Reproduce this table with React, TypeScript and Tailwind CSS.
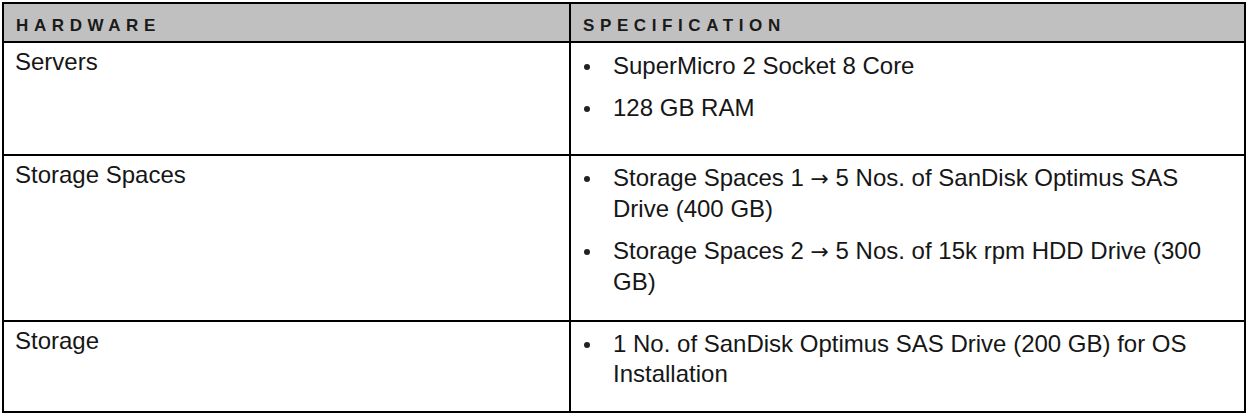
import React from 'react';

type Row = {
  hardware: string;
  height: string;
  specPad: string;
  specs: React.ReactNode[];
};

const Arrow = () => (
  <span className="font-['DejaVu_Sans',sans-serif] text-[22px]">{'\u2192'}</span>
);

const rows: Row[] = [
  {
    hardware: 'Servers',
    height: 'h-[113px]',
    specPad: 'pt-[8px]',
    specs: ['SuperMicro 2 Socket 8 Core', '128 GB RAM'],
  },
  {
    hardware: 'Storage Spaces',
    height: 'h-[166px]',
    specPad: 'pt-[7px]',
    specs: [
      <>
        <div>
          Storage Spaces 1 <Arrow /> 5 Nos. of SanDisk Optimus SAS
        </div>
        <div>Drive (400 GB)</div>
      </>,
      <>
        <div>
          Storage Spaces 2 <Arrow /> 5 Nos. of 15k rpm HDD Drive (300
        </div>
        <div>GB)</div>
      </>,
    ],
  },
  {
    hardware: 'Storage',
    height: 'h-[89px]',
    specPad: 'pt-[7px]',
    specs: ['1 No. of SanDisk Optimus SAS Drive (200 GB) for OS Installation'],
  },
];

const HeaderCell: React.FC<{ label: string; last?: boolean }> = ({ label, last }) => (
  <div
    className={`h-[39px] flex items-center pt-[5px] pl-[12px] bg-[#c0c0c0] border-b-2 border-black ${
      last ? '' : 'border-r-2'
    }`}
  >
    <span className="text-[17px] font-bold tracking-[5.6px] text-[#1a1a1a] leading-none">{label}</span>
  </div>
);

const App: React.FC = () => (
  <div className="w-[1248px] h-[416px] bg-white pt-[2px] pl-[2px] font-['Liberation_Sans',Arial,sans-serif]">
    <div className="w-[1244px] border-2 border-black grid grid-cols-[567px_1fr]">
      {/* Header */}
      <HeaderCell label="HARDWARE" />
      <HeaderCell label="SPECIFICATION" last />

      {/* Body rows */}
      {rows.map((row, i) => {
        const bottom = i < rows.length - 1 ? 'border-b-2' : '';
        return (
          <React.Fragment key={row.hardware}>
            <div
              className={`${row.height} ${bottom} border-r-2 border-black pl-[11px] pt-[4px] text-[24px] leading-[30px] text-[#161616]`}
            >
              {row.hardware}
            </div>
            <div className={`${row.height} ${bottom} border-black ${row.specPad} pr-[20px]`}>
              <ul className="flex flex-col gap-[12px]">
                {row.specs.map((s, j) => (
                  <li key={j} className="flex text-[24px] leading-[30px] text-[#161616]">
                    <span className="w-[42px] shrink-0 relative">
                      <span className="absolute left-[13px] top-[13px] w-[6px] h-[6px] rounded-full bg-[#222]" />
                    </span>
                    <div>{s}</div>
                  </li>
                ))}
              </ul>
            </div>
          </React.Fragment>
        );
      })}
    </div>
  </div>
);

export default App;
